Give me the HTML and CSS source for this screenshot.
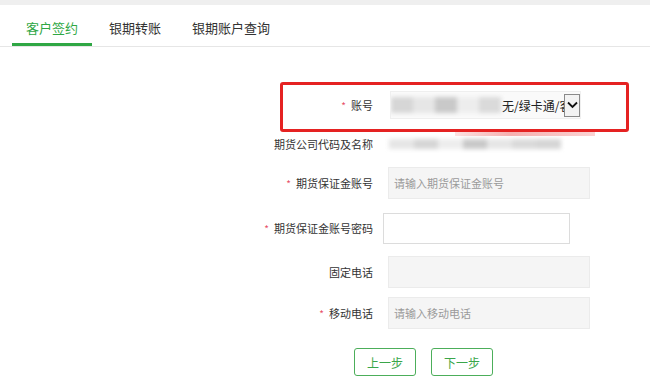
FILE: index.html
```html
<!DOCTYPE html>
<html lang="zh-CN">
<head>
    <meta charset="UTF-8">
    <meta name="viewport" content="width=device-width, initial-scale=1.0">
    <title>银期签约</title>
    <link rel="stylesheet" href="styles.css">
</head>
<body>

<div class="topbar"></div>

<ul class="tabs">
    <li class="tab active">客户签约</li>
    <li class="tab">银期转账</li>
    <li class="tab">银期账户查询</li>
</ul>

<form class="sign-form">
    <div class="form-row row-account">
        <label class="form-label"><span class="req">*</span>账号</label>
        <div class="fake-select">
            <span class="mask">
                <i class="m1"></i><i class="m2"></i><i class="m3"></i><i class="m4"></i><i class="m5"></i>
            </span>
            <span class="select-text">无/绿卡通/客户号</span>
            <span class="select-arrow">
                <svg width="11" height="8" viewBox="0 0 11 8"><path d="M1 1.5 L5.5 6 L10 1.5" fill="none" stroke="#111" stroke-width="1.8"/></svg>
            </span>
        </div>
        <div class="mark-box"></div>
    </div>

    <div class="form-row row-company">
        <label class="form-label">期货公司代码及名称</label>
        <span class="mask mask-wide">
            <i class="m2"></i><i class="m1"></i><i class="m4"></i><i class="m3"></i><i class="m2"></i><i class="m5"></i><i class="m1"></i>
        </span>
    </div>

    <div class="form-row row-margin">
        <label class="form-label"><span class="req">*</span>期货保证金账号</label>
        <input type="text" class="form-input" placeholder="请输入期货保证金账号">
    </div>

    <div class="form-row row-pwd">
        <label class="form-label"><span class="req">*</span>期货保证金账号密码</label>
        <input type="password" class="form-input input-pwd">
    </div>

    <div class="form-row row-tel">
        <label class="form-label">固定电话</label>
        <input type="text" class="form-input">
    </div>

    <div class="form-row row-mobile">
        <label class="form-label"><span class="req">*</span>移动电话</label>
        <input type="text" class="form-input" placeholder="请输入移动电话">
    </div>

    <div class="form-actions">
        <button type="button" class="btn">上一步</button>
        <button type="button" class="btn">下一步</button>
    </div>
</form>

</body>
</html>
```

FILE: styles.css
```css
body {
    margin: 0;
    font-family: "Noto Sans CJK SC", "Noto Sans", Arial, sans-serif;
    color: #333;
    background: #fff;
}
.topbar {
    height: 5px;
    background-color: #efefef;
}
.tabs {
    list-style: none;
    margin: 0;
    padding: 0 0 0 12px;
    display: flex;
    gap: 3px;
    border-bottom: 1px solid #e6e6e6;
}
.tab {
    padding: 13px 14px 5px;
    line-height: 20px;
    font-size: 13px;
    color: #333;
    border-bottom: 3px solid transparent;
}
.tab.active {
    color: #2fa744;
    border-bottom-color: #2fa744;
}
.sign-form {
    padding: 42px 0 0 253px;
}
.form-row {
    display: flex;
    align-items: center;
    height: 32px;
    position: relative;
}
.form-label {
    width: 120px;
    flex: none;
    text-align: right;
    font-size: 11px;
    margin-right: 15px;
}
.req {
    color: #e8506a;
    font-size: 10px;
    margin-right: 5px;
}
.row-company { margin-top: 7px; }
.row-margin { margin-top: 7px; }
.row-pwd { margin-top: 13px; }
.row-tel { margin-top: 12px; }
.row-mobile { margin-top: 9px; }

.form-input {
    box-sizing: border-box;
    width: 202px;
    height: 32px;
    padding: 0 5px;
    border: 1px solid #ebebeb;
    background-color: #f5f5f5;
    font-family: inherit;
    font-size: 11px;
    color: #333;
    outline: none;
}
.form-input::placeholder {
    color: #9a9a9a;
}
.input-pwd {
    margin-left: -5px;
    width: 187px;
    height: 31px;
    background-color: #fff;
    border-color: #dcdcdc;
}

/* 账号下拉 */
.fake-select {
    box-sizing: border-box;
    margin-left: 2px;
    width: 191px;
    height: 28px;
    border: 1px solid #efefef;
    background-color: #fafafa;
    display: flex;
    align-items: center;
    overflow: hidden;
}
.select-text {
    width: 62px;
    overflow: hidden;
    white-space: nowrap;
    font-size: 12px;
    color: #222;
    margin-left: 1px;
}
.select-arrow {
    flex: none;
    width: 14px;
    height: 21px;
    border: 1px solid #8a8a8a;
    background: #f3f3f3;
    display: flex;
    align-items: center;
    justify-content: center;
}
.mask {
    display: flex;
    width: 110px;
    height: 16px;
    filter: blur(2px);
}
.mask i {
    flex: 1;
}
.m1 { background: #d6d6d6; }
.m2 { background: #e6e6e6; }
.m3 { background: #c9c9c9; }
.m4 { background: #ededed; }
.m5 { background: #dadada; }
.mask-wide {
    width: 172px;
    height: 10px;
    margin-left: 1px;
}

/* 标注框 */
.mark-box {
    position: absolute;
    left: 27px;
    top: -7px;
    width: 343px;
    height: 44px;
    border: 3px solid #e52222;
    border-radius: 3px;
}
.mark-box::after {
    content: "";
    position: absolute;
    left: 172px;
    bottom: -7px;
    width: 140px;
    height: 4px;
    background: linear-gradient(to right, rgba(240, 110, 110, 0.2), rgba(240, 110, 110, 0.55) 40%, rgba(240, 110, 110, 0.3));
}

.form-actions {
    display: flex;
    gap: 15px;
    padding-left: 101px;
    margin-top: 19px;
}
.btn {
    width: 62px;
    height: 28px;
    padding: 0;
    background-color: #fff;
    color: #3aa64a;
    border: 1px solid #4cae5a;
    border-radius: 3px;
    font-family: inherit;
    font-size: 12px;
    cursor: pointer;
}
.btn:hover {
    background-color: #f2faf3;
}
```
